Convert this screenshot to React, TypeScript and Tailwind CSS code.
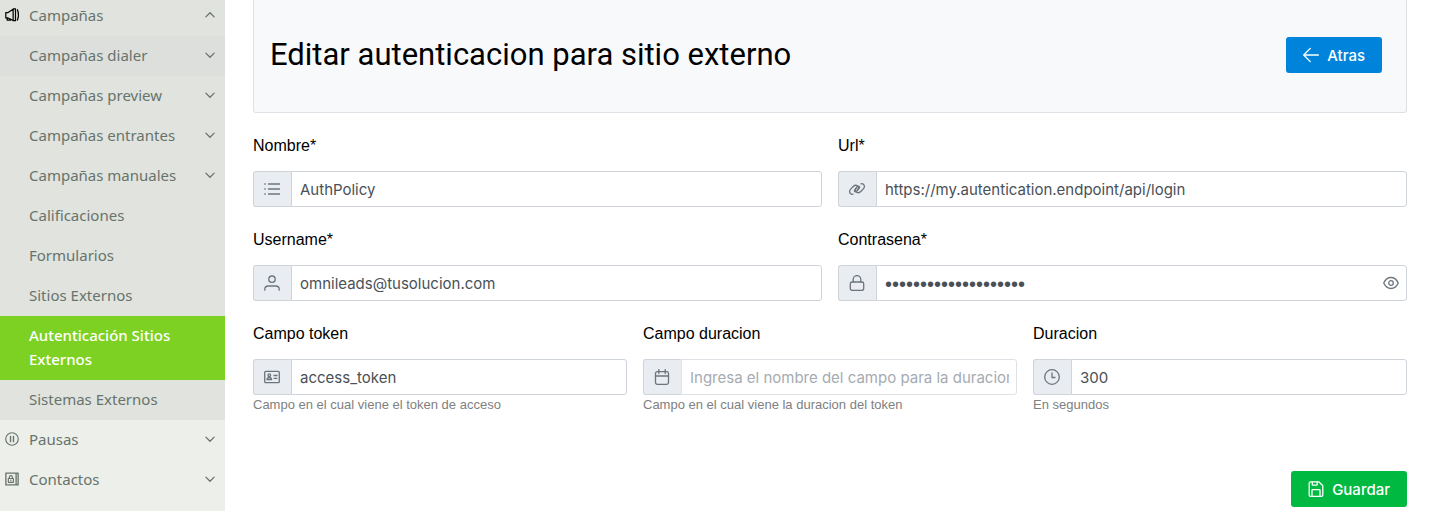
import { ReactNode, useState } from "react";
import clsx from "clsx";

type MenuItem = {
  label: string;
  icon?: ReactNode;
  arrow?: "up" | "down";
  state?: "hover" | "active";
};

const campaignItems: MenuItem[] = [
  { label: "Campañas dialer", arrow: "down", state: "hover" },
  { label: "Campañas preview", arrow: "down" },
  { label: "Campañas entrantes", arrow: "down" },
  { label: "Campañas manuales", arrow: "down" },
  { label: "Calificaciones" },
  { label: "Formularios" },
  { label: "Sitios Externos" },
  { label: "Autenticación Sitios Externos", state: "active" },
  { label: "Sistemas Externos" },
];

function Icon({ className, children }: { className?: string; children: ReactNode }) {
  return (
    <svg
      viewBox="0 0 16 16"
      className={clsx("shrink-0", className ?? "size-4")}
      fill="none"
      stroke="currentColor"
      strokeWidth="1.3"
      strokeLinecap="round"
      strokeLinejoin="round"
      aria-hidden="true"
    >
      {children}
    </svg>
  );
}

const icons = {
  list: (
    <Icon>
      <path d="M4.500 3h11M4.500 8h11M4.500 13h11M.8 3h.5M.8 8h.5M.8 13h.5" />
    </Icon>
  ),
  link: (
    <Icon>
      <path d="M4 13.200c-1.800.500-3.400-.8-3.400-2.700 0-1 .4-1.700 1.100-2.400l2.500-2.600c1.400-1.400 3.200-1.500 4.400-.4 1.200 1.200 1.200 3 0 4.300l-.9.9c-.6.6-1.400.7-1.900.2-.5-.500-.400-1.300.1-1.800l1.600-1.700" />
      <path d="M12 2.800c1.800-.5 3.400.8 3.400 2.700 0 1-.4 1.700-1.100 2.400l-2.500 2.600c-1.400 1.400-3.200 1.500-4.400.4-1.200-1.200-1.200-3 0-4.300l.9-.9c.6-.6 1.400-.7 1.900-.2.5.500.4 1.300-.1 1.800l-1.600 1.700" />
    </Icon>
  ),
  user: (
    <Icon>
      <circle cx="8" cy="4.200" r="3.200" />
      <path d="M.8 15.200v-.7c0-2 1.500-3.500 3.500-3.500h7.400c2 0 3.500 1.500 3.500 3.500v.7" />
    </Icon>
  ),
  lock: (
    <Icon>
      <rect x="1.300" y="7" width="13.400" height="8.400" rx="1.800" />
      <path d="M4.200 7V4.400a3.800 3.800 0 0 1 7.600 0V7" />
    </Icon>
  ),
  card: (
    <Icon>
      <rect x=".7" y="2.300" width="14.600" height="11.400" rx="1" />
      <circle cx="5.300" cy="6.200" r="1.300" />
      <path d="M3 10.700c.2-1.500 1-2.200 2.300-2.200s2.100.7 2.300 2.200zM10 6.500h3M10 9.300h3" />
    </Icon>
  ),
  calendar: (
    <Icon>
      <rect x="1.500" y="2.700" width="13" height="12.600" rx="1.800" />
      <path d="M1.500 7h13M4.800.6v4M11.200.6v4" />
    </Icon>
  ),
  clock: (
    <Icon>
      <circle cx="8" cy="8" r="7.300" />
      <path d="M8 3.800V8.500h3" />
    </Icon>
  ),
  eye: (
    <Icon>
      <path d="M.7 8C2.400 4.400 5 2.500 8 2.500s5.600 1.900 7.300 5.500c-1.700 3.600-4.300 5.500-7.300 5.500S2.400 11.600.7 8z" />
      <circle cx="8" cy="8" r="2.300" />
    </Icon>
  ),
  save: (
    <Icon>
      <path d="M2.500.8h8.300l4 4v9.200c0 .8-.6 1.300-1.300 1.300H2.500c-.7 0-1.300-.5-1.300-1.300V2.100c0-.7.600-1.300 1.300-1.300z" />
      <path d="M4 15.200V9.400c0-.4.300-.7.700-.7h6.600c.4 0 .7.300.7.700v5.800M4.300 1v2.700c0 .3.200.5.500.5h3.900c.3 0 .5-.2.500-.5V1" />
    </Icon>
  ),
  back: (
    <Icon>
      <path d="M15.400 8H.7M7.300 1.400.7 8l6.600 6.600" />
    </Icon>
  ),
};

const megaphone = (
  <Icon className="size-[14px] text-black">
    <g strokeWidth="1.400">
      <path d="M9.300 1.300v13L3.500 11.400H.9V5.200h2.600l5.800-3.900zM9.300 1h2.700v13.500H9.300M2.500 11.500v2.400h3.700v-1.200" />
      <path d="M14.200 2c1.500 3.800 1.500 8 0 11.800" />
    </g>
  </Icon>
);

const pause = (
  <Icon className="size-[14px]">
    <circle cx="8" cy="8" r="7.200" />
    <path d="M6.300 5v6M9.700 5v6" strokeWidth="1.600" />
  </Icon>
);

const contacts = (
  <Icon className="size-[14px]">
    <path d="M1 1.200h14v13.600H1zM12.700 1.200v13.600" strokeWidth="1.500" />
    <path d="M3.800 7.400h5.800v4.400H3.800zM5 7.400V5.800a1.700 1.700 0 0 1 3.400 0v1.600M6.700 9.200v.8" />
  </Icon>
);

function MenuLink({ label, icon, arrow, state }: MenuItem) {
  return (
    <li>
      <a
        href="#"
        className={clsx(
          "flex items-start pt-[7px] pr-[7px] pb-[9px] pl-[5px]",
          state === "active" && "bg-[#7dd122] font-medium text-white",
          state === "hover" && "bg-[#dddfdc]"
        )}
      >
        <span className="flex h-6 w-6 shrink-0 items-center">{icon}</span>
        <span className="min-w-0 flex-1">{label}</span>
        <span className="flex h-6 w-4 shrink-0 items-center justify-center">
          {arrow && (
            <Icon className="size-3">
              <path strokeWidth="1.700" d={arrow === "up" ? "M2.500 10.500 8 5l5.500 5.500" : "M2.500 5.500 8 11l5.500-5.500"} />
            </Icon>
          )}
        </span>
      </a>
    </li>
  );
}

type FieldProps = {
  id: string;
  label: string;
  icon: ReactNode;
  value?: string;
  type?: string;
  placeholder?: string;
  help?: string;
};

function Field({ id, label, icon, value = "", type = "text", placeholder, help }: FieldProps) {
  const [text, setText] = useState(value);
  const [visible, setVisible] = useState(false);
  const isPassword = type === "password";
  const masked = isPassword && !visible;

  return (
    <div className="min-w-0">
      <label htmlFor={id} className="block pt-px text-base text-black">
        {label}
      </label>
      <div className="mt-[13px] flex h-9">
        <span className="flex shrink-0 items-center rounded-l-[3px] border border-r-0 border-[#ced4da] bg-[#e9ecf1] pr-[11px] pl-[10px] text-[#6c757d]">
          {icon}
        </span>
        <div
          className={clsx(
            "flex min-w-0 flex-1 items-center rounded-r-[3px] border bg-white pr-[7px] pl-2",
            placeholder ? "border-[#dee2e6]" : "border-[#ced4da]"
          )}
        >
          <input
            id={id}
            type={isPassword && visible ? "text" : type}
            value={text}
            placeholder={placeholder}
            onChange={(e) => setText(e.target.value)}
            className={clsx(
              "w-full min-w-0 flex-1 bg-transparent pt-0.5 text-[#495057] outline-none placeholder:text-[#a5abb1]",
              masked ? "text-xl leading-6" : "font-['Inter',sans-serif] text-[15px] leading-6"
            )}
          />
          {isPassword && (
            <button
              type="button"
              aria-label="Mostrar contrasena"
              onClick={() => setVisible(!visible)}
              className="text-[#6c757d]"
            >
              {icons.eye}
            </button>
          )}
        </div>
      </div>
      {help && <small className="block text-[13px] leading-5 text-[#808080]">{help}</small>}
    </div>
  );
}

function App() {
  return (
    <div className="flex min-h-screen bg-white font-['Liberation_Sans',Arial,sans-serif]">
      <nav className="w-[225px] shrink-0 bg-[#ecefea] font-['Noto_Sans',sans-serif] text-[15px] leading-6 text-[#68736c]">
        <ul className="-mt-1">
          <li className="bg-[#e0e3de]">
            <ul>
              <MenuLink label="Campañas" icon={megaphone} arrow="up" />
              {campaignItems.map((item) => (
                <MenuLink key={item.label} {...item} />
              ))}
            </ul>
          </li>
          <MenuLink label="Pausas" icon={pause} arrow="down" />
          <MenuLink label="Contactos" icon={contacts} arrow="down" />
        </ul>
      </nav>

      <main className="min-w-0 flex-1 pr-[27px] pl-7">
        <header className="flex items-center justify-between rounded-b-[3px] border border-t-0 border-[#dee2e6] bg-[#f8f9fb] pt-[37px] pr-6 pb-[39px] pl-4">
          <h1 className="font-['Roboto',sans-serif] text-[31px] leading-9 text-black">
            Editar autenticacion para sitio externo
          </h1>
          <button
            type="button"
            className="flex h-9 items-center gap-2 rounded-[3px] bg-[#0084db] px-[17px] font-['Inter',sans-serif] text-[15px] font-medium text-white"
          >
            {icons.back}
            <span className="pt-0.5">Atras</span>
          </button>
        </header>

        <form onSubmit={(e) => e.preventDefault()} className="flex flex-col gap-5 pt-5">
          <div className="grid grid-cols-2 gap-x-4 gap-y-5">
            <Field id="nombre" label="Nombre*" icon={icons.list} value="AuthPolicy" />
            <Field id="url" label="Url*" icon={icons.link} value="https://my.autentication.endpoint/api/login" />
            <Field id="username" label="Username*" icon={icons.user} value="omnileads@tusolucion.com" />
            <Field id="password" label="Contrasena*" icon={icons.lock} type="password" value="12345678901234567890" />
          </div>
          <div className="grid grid-cols-3 gap-4">
            <Field
              id="token"
              label="Campo token"
              icon={icons.card}
              value="access_token"
              help="Campo en el cual viene el token de acceso"
            />
            <Field
              id="campo-duracion"
              label="Campo duracion"
              icon={icons.calendar}
              placeholder="Ingresa el nombre del campo para la duracion"
              help="Campo en el cual viene la duracion del token"
            />
            <Field id="duracion" label="Duracion" icon={icons.clock} value="300" help="En segundos" />
          </div>
          <div className="flex justify-end pt-9">
            <button
              type="submit"
              className="flex h-9 items-center gap-2 rounded-[3px] bg-[#00b941] px-[17px] font-['Inter',sans-serif] text-[15px] font-medium text-white"
            >
              {icons.save}
              <span className="pt-0.5">Guardar</span>
            </button>
          </div>
        </form>
      </main>
    </div>
  );
}

export default App;
